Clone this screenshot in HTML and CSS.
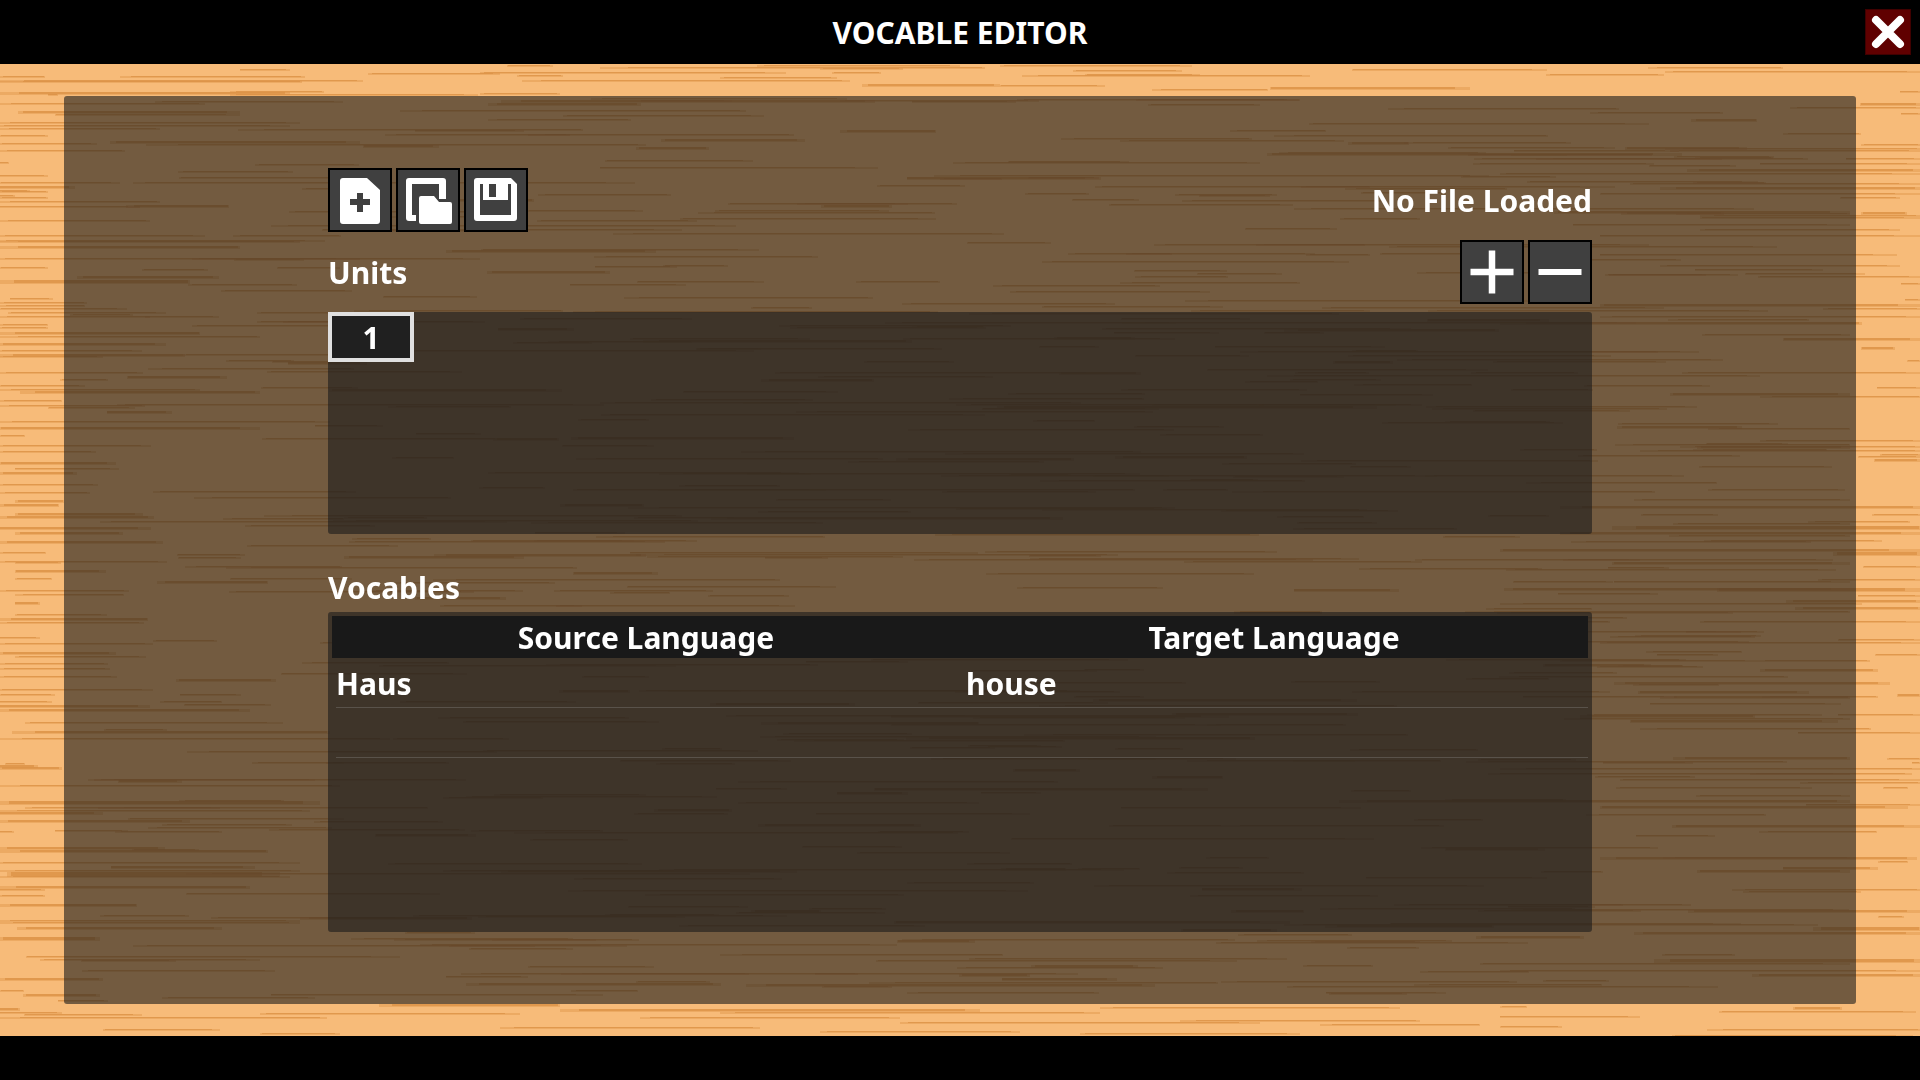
FILE: index.html
```
<!DOCTYPE html>
<html lang="en">
<head>
<meta charset="utf-8">
<title>Vocable Editor</title>
<link rel="stylesheet" href="styles.css">
</head>
<body>
<header class="titlebar">
  <h1 class="title">VOCABLE EDITOR</h1>
  <button class="close" type="button" aria-label="Close">
    <svg viewBox="0 0 44 44" aria-hidden="true"><path d="M10 10 34 34M34 10 10 34" stroke="#fff" stroke-width="8" stroke-linecap="round"/></svg>
  </button>
</header>
<main class="desk">
  <canvas class="grain" id="grain" aria-hidden="true"></canvas>
  <section class="panel">
    <div class="content">
      <div class="row">
        <div class="buttons">
          <button class="tool" type="button" aria-label="New file">
            <svg viewBox="0 0 60 60" aria-hidden="true"><path fill="#fff" fill-rule="evenodd" d="M13 8H37L50 20V51Q50 54 47 54H13Q10 54 10 51V11Q10 8 13 8ZM27 23V29H20V35H27V42H33V35H40V29H33V23Z"/></svg>
          </button>
          <button class="tool" type="button" aria-label="Open file">
            <svg viewBox="0 0 60 60" aria-hidden="true"><path fill="#fff" d="M11 8H45Q48 8 48 11V29H41V14H14V45H18V51H11Q8 51 8 48V11Q8 8 11 8Z"/><path fill="#fff" d="M23 26H36L41 32H52Q54 32 54 34V52Q54 54 52 54H23Q21 54 21 52V28Q21 26 23 26Z"/></svg>
          </button>
          <button class="tool" type="button" aria-label="Save file">
            <svg viewBox="0 0 60 60" aria-hidden="true"><path fill="#fff" fill-rule="evenodd" d="M11 8H45L51 14V48Q51 51 48 51H11Q8 51 8 48V11Q8 8 11 8ZM14 14V45H45V14H42V30H17V14ZM23 14V27H30V14Z"/></svg>
          </button>
        </div>
        <p class="label">No File Loaded</p>
      </div>
      <div class="row">
        <h2 class="label">Units</h2>
        <div class="buttons">
          <button class="tool" type="button" aria-label="Add unit">
            <svg viewBox="0 0 60 60" aria-hidden="true"><path d="M30 8.5V51.5M8.500 30H51.5" stroke="#fff" stroke-width="6.500"/></svg>
          </button>
          <button class="tool" type="button" aria-label="Remove unit">
            <svg viewBox="0 0 60 60" aria-hidden="true"><path d="M8.500 30H51.5" stroke="#fff" stroke-width="6"/></svg>
          </button>
        </div>
      </div>
      <div class="units"><button class="unit" type="button" aria-pressed="true">1</button></div>
      <section class="vocables-group">
        <h2 class="label">Vocables</h2>
        <div class="vocables">
          <table class="table">
            <thead><tr><th scope="col">Source Language</th><th scope="col">Target Language</th></tr></thead>
            <tbody>
              <tr><td><input class="word" type="text" aria-label="Source word 1" value="Haus"></td><td><input class="word" type="text" aria-label="Target word 1" value="house"></td></tr>
              <tr><td><input class="word" type="text" aria-label="Source word 2"></td><td><input class="word" type="text" aria-label="Target word 2"></td></tr>
            </tbody>
          </table>
        </div>
      </section>
    </div>
  </section>
</main>
<footer class="footer"></footer>
<script src="grain.js"></script>
</body>
</html>
```
FILE: styles.css
```
* { box-sizing: border-box; }
body {
  margin: 0;
  min-height: 100vh;
  display: flex;
  flex-direction: column;
  background: #000;
  color: #fff;
  font: 700 30px/40px "Noto Sans", sans-serif;
}
button, input { font: inherit; color: inherit; }
button { padding: 0; }
svg { display: block; width: 100%; height: 100%; fill: none; }
.titlebar {
  display: grid;
  grid-template-columns: 1fr auto 1fr;
  align-items: center;
  height: 64px;
  padding: 0 9px;
}
.title, .label { margin: 0; padding-top: 2px; font-size: inherit; }
.title { grid-column: 2; }
.close {
  justify-self: end;
  width: 46px;
  height: 46px;
  border: 1px solid #400000;
  background: #600000;
}
.desk {
  position: relative;
  flex: 1;
  display: flex;
  padding: 32px 64px;
  background: #f7bb79;
}
/* wood strokes lie behind the panel */
.grain { position: absolute; inset: 0; width: 100%; height: 100%; }
.panel {
  position: relative;
  flex: 1;
  display: flex;
  justify-content: center;
  padding: 72px 32px;
  border-radius: 3px;
  background: rgba(26, 26, 26, .6);
}
.content {
  flex: 1;
  display: flex;
  flex-direction: column;
  gap: 8px;
  max-width: 1264px;
}
.row { display: flex; justify-content: space-between; align-items: center; }
.buttons { display: flex; gap: 4px; }
.tool {
  width: 64px;
  height: 64px;
  border: 2px solid #000;
  background: #404040;
}
.units, .vocables { border-radius: 3px; background: rgba(26, 26, 26, .6); }
.units { min-height: 222px; }
.unit {
  display: block;
  width: 86px;
  height: 50px;
  padding-top: 2px;
  border: 4px solid #e0e0e0;
  background: #202020;
}
.vocables-group {
  flex: 1;
  display: flex;
  flex-direction: column;
  gap: 4px;
  padding-top: 24px;
}
.vocables { flex: 1; min-height: 320px; padding: 4px; }
.table { width: 100%; table-layout: fixed; border-collapse: collapse; }
.table th { height: 42px; padding: 2px 0 0; background: #191919; }
.table td { height: 50px; padding: 0; }
.table td:first-child { padding-left: 4px; }
.word {
  display: block;
  width: 100%;
  height: 50px;
  padding: 2px 0 0;
  border: 0;
  border-bottom: 1px solid #59524a;
  background: none;
  outline: none;
}
.table td:last-child .word { padding-left: 6px; }
.footer { height: 44px; }
```
FILE: grain.js
```
const canvas = document.getElementById('grain');
const ctx = canvas.getContext('2d');
const WIDTH = 1920;

// Strokes as "y x1 x2 [thickness]"; y is counted from the window's top.
const strokes = `
69 240 290,73 368 500,76 0 45,76 120 305,80 0 363,81 0 302,91 230 324,92 0 290 2,94 48 58,94 230 478
103 0 205,111 18 240 2,114 55 240,122 0 300,125 0 290,128 0 160,135 0 48,143 0 97,150 0 125,162 0 9
175 0 48,182 0 120,186 0 75 2,190 0 30,191 0 48,195 0 15,197 0 48,201 0 160,206 0 140,220 0 150,235 0 205
240 0 325,241 0 300,246 0 240 2,258 0 360,267 0 48,280 0 190 3,298 10 53,302 0 87,305 0 85,308 0 127,312 8 166
316 0 150,324 0 48,327 0 48,332 0 200 2,336 0 260,343 0 166 2,350 0 142,354 0 185 2,356 0 103,372 0 143
379 60 108,385 0 85,389 0 200,391 20 260 2,400 0 62,405 0 145,407 48 135,421 0 330,427 0 260 2,435 0 25
701 0 52,705 0 150 2,709 0 250 2,722 25 283,731 12 330 2,738 0 390,763 5 25,765 0 38 2,767 0 62 2,785 0 340
801 0 320 3,807 25 220,810 0 310,812 0 103 2,820 0 190 2,830 55 128,831 0 14,847 0 165 2,850 0 268 2,862 0 300
870 0 300,872 7 280 4,876 0 290,886 0 250 2,889 0 45,895 0 45,904 0 137 2,920 0 300,922 0 300,927 17 222 2
937 0 100 3,956 26 400,959 40 260,978 0 103 2,990 0 24,994 23 100 2,1000 58 108,1008 0 20 2,1012 0 62,1014 24 142
1017 0 327,1013 260 520,1029 103 220,1033 260 340,1004 379 560 2
65 507 553,67 600 985,65 757 960,72 480 786,75 517 563,80 522 850,77 720 837,72 832 881,68 820 903,84 862 1000 2
93 480 560,65 1000 1192,70 1073 1182,75 1022 1310,74 1085 1200,85 1000 1105,89 1152 1268,87 1270 1470 2,69 1352 1547
74 1546 1664,67 1648 1783,71 1665 1920,91 1900 1920,103 1860 1920 2,107 1790 1920,113 1901 1920,133 1783 1861
144 1861 1920,148 1665 1920,150 1670 1920,158 1846 1920,163 1760 1920,169 1687 1920 2,173 1500 1920,183 1630 1920
187 1660 1920 2,193 1600 1920,197 1840 1900,212 1861 1907 2,215 1700 1920,217 1700 1920,229 1700 1900,235 1600 1920
254 1600 1897,265 1660 1900,273 1745 1865,276 1758 1920,283 1901 1920,299 1905 1920,304 1600 1920 2,308 1823 1920
316 1600 1920,322 1500 1862 2,338 1783 1920 2,347 1861 1895 2,360 1907 1920,372 1682 1920,387 1877 1920,396 1760 1920
440 1760 1920,446 1680 1920,450 1640 1920,454 1880 1920,456 1858 1920,459 1874 1920 2,506 1560 1920 2,514 1872 1920
521 1808 1910,526 1612 1920 3,532 1560 1920 2,540 1704 1882,549 1500 1920 2,552 1833 1920 3,566 1863 1920,579 1818 1920
588 1717 1920 3,595 1858 1920,600 1786 1920 2,603 1500 1862,607 1795 1920 2,621 1700 1920,639 1838 1920,642 1600 1920
654 1875 1920,660 1759 1870,669 1760 1878 2,682 1614 1890 2,694 1897 1920 2,696 1762 1878,714 1838 1920,728 1640 1871
732 1798 1920,758 1887 1920,762 1912 1920,768 1500 1920,773 1750 1912,779 1620 1920,782 1800 1920,787 1883 1908
804 1806 1920,806 1600 1908 2,825 1672 1920 2,831 1759 1877,857 1600 1917 2,861 1878 1908,867 1783 1878 2
889 1732 1920,891 1743 1861,910 1688 1920 2,916 1878 1904,927 1813 1920 3,932 1634 1920 2,959 1654 1920 3
970 1500 1920,974 1752 1920 2,1006 1500 1527,1007 1793 1842 2,1011 1719 1916,1016 1500 1640,1026 1500 1562
1029 1707 1920,1035 1672 1913,1009 560 980 2,1012 720 1100,1017 640 900,1022 900 1260,1027 500 760,1031 820 1020
1007 1100 1400,1020 1180 1420,1033 1080 1300,1024 1320 1480`;

// Park-Miller generator, so that the grain is the same on every draw
function random(seed) {
  return () => (seed = (seed * 16807) % 2147483647) / 2147483647;
}

function draw() {
  const w = canvas.width = canvas.clientWidth;
  const h = canvas.height = canvas.clientHeight;
  const rnd = random(41);

  function stroke(x1, x2, y, thickness) {
    const len = x2 - x1;
    ctx.fillStyle = 'rgba(221, 145, 68, .4)';
    ctx.fillRect(x1, y, len, thickness + 1);
    ctx.fillStyle = 'rgba(216, 142, 66, .65)';
    ctx.fillRect(x1 + Math.floor(len * 0.08 * rnd()), y, Math.floor(len * 0.92), thickness);
  }

  for (const item of strokes.trim().split(/[,\n]/)) {
    const [y, x1, x2, thickness = 1] = item.split(' ').map(Number);
    stroke(Math.round(x1 * w / WIDTH), Math.round(x2 * w / WIDTH), y - 64, thickness);
  }

  // fill the middle of the board
  for (let i = 0; i < w * h / 3000; i++) {
    const y = 34 + Math.floor(rnd() * (h - 72));
    const x = 70 + Math.floor(rnd() * (w - 280));
    const len = Math.min(60 + Math.floor(rnd() * rnd() * 520), w - 70 - x);
    stroke(x, x + len, y, rnd() > 0.8 ? 2 : 1);
  }
  for (let i = 0; i < 34; i++) {
    const y = 376 + Math.floor((i + rnd()) * 7.6);
    stroke(rnd() > 0.75 ? 15 : 0, 40 + Math.floor(rnd() * 160), y, rnd() > 0.6 ? 2 : 1);
  }
}

draw();
window.addEventListener('resize', draw);
```
